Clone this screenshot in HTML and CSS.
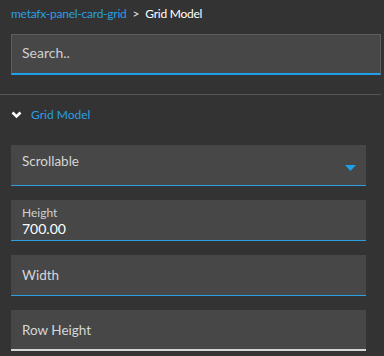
FILE: index.html
```html
<!DOCTYPE html>
<html>
<head>
<meta charset="utf-8">
<link rel="stylesheet" href="styles.css">
</head>
<body>
<div class="panel">
  <div class="crumbs"><span class="crumb-link">metafx-panel-card-grid</span><span class="crumb-sep">&gt;</span><span class="crumb-cur">Grid Model</span></div>
  <div class="search"><span class="placeholder">Search..</span></div>
  <div class="divider"></div>
  <div class="section-head">
    <svg class="chev" width="11" height="8" viewBox="0 0 11 8"><path d="M1.5 1.5 L5.5 5.5 L9.5 1.5" fill="none" stroke="#ffffff" stroke-width="2.6"/></svg>
    <span class="section-title">Grid Model</span>
  </div>
  <div class="fields">
    <div class="field select">
      <span class="field-text">Scrollable</span>
      <svg class="arrow" width="11" height="6" viewBox="0 0 11 6"><path d="M0 0 H11 L5.5 6 Z" fill="#1ea0e8"/></svg>
    </div>
    <div class="field filled">
      <span class="field-label">Height</span>
      <span class="field-value">700.00</span>
    </div>
    <div class="field">
      <span class="field-text">Width</span>
    </div>
    <div class="field plain">
      <span class="field-text">Row Height</span>
    </div>
  </div>
</div>
</body>
</html>
```
FILE: styles.css
```css
html, body {
  margin: 0;
  padding: 0;
  background: #333333;
}
body {
  font-family: "Lato", "Noto Sans", sans-serif;
  color: #dcdcdc;
  width: 384px;
  height: 356px;
  overflow: hidden;
}
.panel {
  width: 381px;
}
.crumbs {
  height: 34px;
  display: flex;
  align-items: center;
  padding-left: 11px;
  padding-bottom: 8px;
  box-sizing: border-box;
  font-size: 12px;
  letter-spacing: -0.25px;
}
.crumb-link {
  color: #2a9fe2;
}
.crumb-sep {
  color: #e6e6e6;
  margin: 0 6px 0 6px;
}
.crumb-cur {
  color: #ffffff;
}
.search {
  margin-left: 11px;
  height: 41px;
  box-sizing: border-box;
  background: #474747;
  border: 1px solid #5e5e5e;
  border-bottom: 2px solid #1ea0e8;
  display: flex;
  align-items: center;
  padding-left: 10px;
  padding-bottom: 3px;
}
.placeholder {
  color: #cfcfcf;
  font-size: 14px;
}
.divider {
  margin-top: 19px;
  height: 1px;
  background: #555555;
}
.section-head {
  height: 40px;
  display: flex;
  align-items: center;
  padding-left: 11px;
  padding-bottom: 1px;
  box-sizing: border-box;
}
.chev {
  margin-right: 9px;
}
.section-title {
  color: #2a9fe2;
  font-size: 12px;
}
.fields {
  margin-top: 10px;
  margin-left: 11px;
  width: 355px;
  display: flex;
  flex-direction: column;
  gap: 14px;
}
.field {
  height: 41px;
  box-sizing: border-box;
  background: #474747;
  border-bottom: 1px solid #2b9fdf;
  display: flex;
  align-items: center;
  padding-left: 11px;
  position: relative;
}
.field-text {
  font-size: 13.5px;
  color: #d6d6d6;
}
.select .field-text {
  margin-top: -9px;
}
.arrow {
  position: absolute;
  right: 10px;
  top: 20px;
}
.filled {
  flex-direction: column;
  align-items: flex-start;
  justify-content: center;
  padding-top: 2px;
}
.field-label {
  font-size: 12px;
  color: #d0d0d0;
  line-height: 15px;
}
.field-value {
  font-size: 14px;
  color: #ffffff;
  line-height: 17px;
}
.plain {
  border-bottom-color: #d6d6d6;
  border-bottom-width: 2px;
}
```
